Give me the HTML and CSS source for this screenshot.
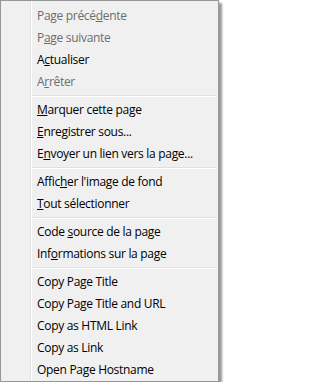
FILE: index.html
```html
<!DOCTYPE html>
<html lang="fr">
<head>
<meta charset="utf-8">
<title>Menu contextuel</title>
<link rel="stylesheet" href="styles.css">
</head>
<body>
<div class="menu">
  <div class="item disabled">Page précé<span class="ak">d</span>ente</div>
  <div class="item disabled">P<span class="ak">a</span>ge suivante</div>
  <div class="item">A<span class="ak">c</span>tualiser</div>
  <div class="item disabled">A<span class="ak">r</span>rêter</div>
  <div class="sep"></div>
  <div class="item"><span class="ak">M</span>arquer cette page</div>
  <div class="item"><span class="ak">E</span>nregistrer sous...</div>
  <div class="item">E<span class="ak">n</span>voyer un lien vers la page...</div>
  <div class="sep"></div>
  <div class="item">Affic<span class="ak">h</span>er l'image de fond</div>
  <div class="item"><span class="ak">T</span>out sélectionner</div>
  <div class="sep"></div>
  <div class="item">Code <span class="ak">s</span>ource de la page</div>
  <div class="item">Inf<span class="ak">o</span>rmations sur la page</div>
  <div class="sep"></div>
  <div class="item">Copy Page Title</div>
  <div class="item">Copy Page Title and URL</div>
  <div class="item">Copy as HTML Link</div>
  <div class="item">Copy as Link</div>
  <div class="item">Open Page Hostname</div>
</div>
</body>
</html>
```
FILE: styles.css
```css
html, body {
  margin: 0;
  padding: 0;
  background: #ffffff;
}

body {
  font-family: "Segoe UI", "Open Sans", "Noto Sans", sans-serif;
  font-size: 12px;
  letter-spacing: -0.3px;
  color: #000000;
}

.menu {
  box-sizing: border-box;
  width: 219px;
  height: 382px;
  border: 1px solid #979797;
  padding: 2px;
  background-color: #f0f0f0;
  background-image: linear-gradient(to right,
    transparent 29px, #e2e3e3 29px, #e2e3e3 30px,
    #ffffff 30px, #ffffff 31px, transparent 31px);
  box-shadow: 3px 3px 2px rgba(0, 0, 0, 0.4);
  display: flex;
  flex-direction: column;
}

.item {
  box-sizing: border-box;
  height: 22px;
  line-height: 19px;
  padding: 3px 0 0 34px;
  white-space: nowrap;
  overflow: hidden;
}

.item.disabled {
  color: #6d6d6d;
}

.ak {
  text-decoration: underline;
}

.sep {
  box-sizing: border-box;
  height: 6px;
  margin-left: 29px;
  padding-top: 4px;
}

.sep::before {
  content: "";
  display: block;
  height: 1px;
  background: #e0e0e0;
  border-bottom: 1px solid #ffffff;
}
```
